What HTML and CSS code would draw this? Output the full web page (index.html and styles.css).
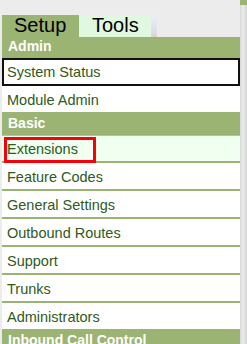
FILE: index.html
```html
<!DOCTYPE html>
<html lang="en">
<head>
  <meta charset="UTF-8">
  <title>Setup - Menu</title>
  <link rel="stylesheet" href="styles.css">
</head>
<body>
  <div class="main">
    <div class="tabs">
      <div class="tab active">Setup</div>
      <div class="tab">Tools</div>
      <div class="tab-shade"></div>
    </div>

    <div class="menu">
      <div class="cat">Admin</div>
      <div class="item focused">System Status</div>
      <div class="item">Module Admin</div>

      <div class="cat">Basic</div>
      <div class="item current">Extensions<span class="mark"></span></div>
      <div class="item">Feature Codes</div>
      <div class="item">General Settings</div>
      <div class="item">Outbound Routes</div>
      <div class="item">Support</div>
      <div class="item">Trunks</div>
      <div class="item">Administrators</div>

      <div class="cat">Inbound Call Control</div>
    </div>
  </div>
  <div class="edge"></div>
</body>
</html>
```

FILE: styles.css
```css
body {
  margin: 0;
  background-color: #ececec;
  font-family: "Liberation Sans", Arial, sans-serif;
  display: flex;
  height: 344px;
  overflow: hidden;
}

.main {
  width: 240px;
}

.tabs {
  display: flex;
  padding: 15px 0 0 2px;
  height: 22px;
}
.tab {
  font-size: 20px;
  line-height: 20px;
  padding-bottom: 2px;
  color: #000;
  background-color: #e0f8df;
  width: 72px;
  padding-left: 13px;
  box-sizing: border-box;
}
.tab.active {
  background-color: #9ab473;
  width: 77px;
  padding-left: 12px;
}
.tab-shade {
  width: 6px;
  background: linear-gradient(to bottom, #eceef6, #dcdde8 80%, #e8cfc0);
}

.menu {
  margin-left: 2px;
  background-color: #fff;
}

.cat {
  background-color: #9bb473;
  color: #fff;
  font-weight: bold;
  font-size: 14px;
  line-height: 19px;
  height: 19px;
  padding: 0 0 2px 6px;
}

.item {
  position: relative;
  font-size: 14.5px;
  line-height: 24px;
  height: 24px;
  padding: 2px 0 0 5px;
  color: #2f5a22;
  border-bottom: 2px solid #9bb473;
}
.item.focused {
  outline: 2px solid #111;
  outline-offset: -2px;
}
.item.current {
  background-color: #f0fff0;
  border-top: 1px solid #a9bde0;
  height: 23px;
  line-height: 23px;
}

/* red annotation box */
.mark {
  position: absolute;
  left: 2px;
  top: 1px;
  width: 92px;
  height: 26px;
  border: 3px solid #f5000b;
  box-sizing: border-box;
}

.edge {
  width: 7px;
  background: linear-gradient(to bottom, #9bb473 5px, transparent 5px),
              linear-gradient(to right, #d9d9d9, #ececec 45%, #d2d2d2);
}
```
